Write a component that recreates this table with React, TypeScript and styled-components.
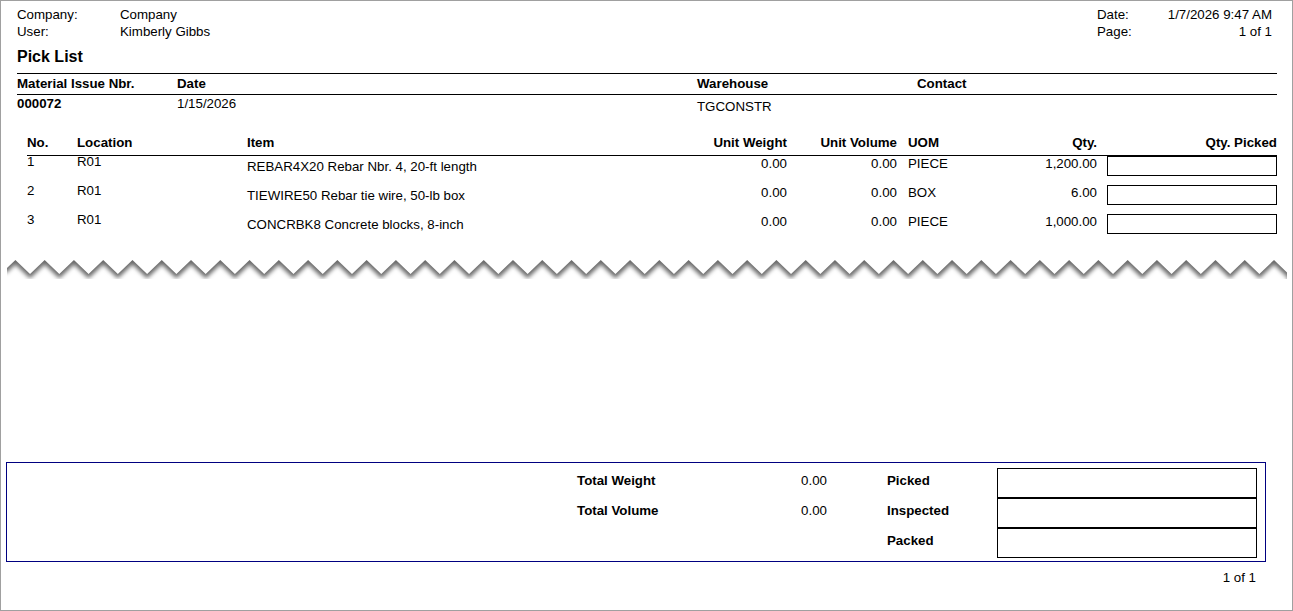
import React from "react";
import styled, { createGlobalStyle } from "styled-components";

const GlobalStyle = createGlobalStyle`
  html, body { margin: 0; padding: 0; background: #fff; }
  body { font-family: "Liberation Sans", Arial, sans-serif; color: #000; }
  * { box-sizing: border-box; }
`;

const Page = styled.div`
  width: 1293px;
  height: 611px;
  border: 1px solid #a0a0a0;
  background: #fff;
  display: flex;
  flex-direction: column;
  font-size: 13.3px;
  overflow: hidden;
`;

const Body = styled.div`
  padding: 5px 15px 0 16px;
`;

const MetaBar = styled.div`
  display: flex;
  justify-content: space-between;
`;

const MetaGrid = styled.div<{ $label: number; $width?: number; $right?: boolean }>`
  display: grid;
  grid-template-columns: ${(p) => p.$label}px 1fr;
  line-height: 17px;
  width: ${(p) => (p.$width ? `${p.$width}px` : "auto")};
  margin-right: ${(p) => (p.$right ? "5px" : "0")};
  & > span:nth-child(2n) {
    text-align: ${(p) => (p.$right ? "right" : "left")};
  }
`;

const Title = styled.h1`
  margin: 7px 0 0;
  font-size: 16px;
  line-height: 20px;
  font-weight: bold;
`;

const InfoHead = styled.div`
  margin-top: 6px;
  display: grid;
  grid-template-columns: 160px 520px 220px 360px;
  border-top: 1px solid #000;
  border-bottom: 1px solid #000;
  height: 22px;
  line-height: 20px;
  font-weight: bold;
`;

const InfoValues = styled.div`
  display: grid;
  grid-template-columns: 160px 520px 220px 360px;
  line-height: 17px;
`;

const InfoValue = styled.span<{ $bold?: boolean; $offset?: number }>`
  font-weight: ${(p) => (p.$bold ? "bold" : "normal")};
  padding-top: ${(p) => p.$offset ?? 0}px;
`;

const cols = "50px 170px 450px 90px 110px 100px 100px 180px";

const Table = styled.div`
  margin: 19px 0 0 10px;
`;

const HeadRow = styled.div`
  display: grid;
  grid-template-columns: ${cols};
  line-height: 18px;
  padding-bottom: 3px;
  border-bottom: 1px solid #000;
  font-weight: bold;
`;

const Row = styled.div`
  display: grid;
  grid-template-columns: ${cols};
  height: 29px;
  line-height: 12px;
`;

const Cell = styled.span<{ $align?: "left" | "right"; $pad?: number; $offset?: number }>`
  text-align: ${(p) => p.$align ?? "left"};
  padding-left: ${(p) => p.$pad ?? 0}px;
  padding-top: ${(p) => p.$offset ?? 0}px;
  white-space: nowrap;
`;

const PickBox = styled.div`
  margin-left: 10px;
  height: 20px;
  border: 1px solid #000;
`;

const Tear = styled.div`
  margin-top: 6px;
  height: 32px;
  line-height: 0;
`;

const FooterBox = styled.div`
  margin: auto 26px 8px 5px;
  height: 100px;
  border: 1px solid #000080;
  padding-top: 5px;
  display: grid;
  grid-template-columns: 570px 150px 100px 60px 110px 260px;
  grid-auto-rows: 30px;
`;

const FootLabel = styled.span<{ $col: number }>`
  grid-column: ${(p) => p.$col};
  font-weight: bold;
  line-height: 26px;
`;

const FootValue = styled.span`
  grid-column: 3;
  text-align: right;
  line-height: 26px;
`;

const SignBox = styled.div`
  grid-column: 6;
  border: 1px solid #000;
`;

const PageNum = styled.div`
  text-align: right;
  padding-right: 36px;
  line-height: 16px;
  margin-bottom: 24px;
`;

const rows = [
  { no: "1", loc: "R01", item: "REBAR4X20 Rebar Nbr. 4, 20-ft length", uom: "PIECE", qty: "1,200.00" },
  { no: "2", loc: "R01", item: "TIEWIRE50 Rebar tie wire, 50-lb box", uom: "BOX", qty: "6.00" },
  { no: "3", loc: "R01", item: "CONCRBK8 Concrete blocks, 8-inch", uom: "PIECE", qty: "1,000.00" },
];

function zigzag() {
  const P = 29.27;
  const px0 = 14.4;
  const top = 11;
  const amp = 14;
  const h = P / 2;
  const x0 = 6;
  const x1 = 1286;
  const yAt = (x: number) => {
    const t = (((x - px0) % P) + P) % P;
    const d = Math.min(t, P - t);
    return top + (amp * d) / h;
  };
  const pts: [number, number][] = [[x0, yAt(x0)]];
  for (let k = 0; k < 200; k++) {
    const pk = px0 + k * P;
    const vl = pk + h;
    if (pk > x0 && pk < x1) pts.push([pk, top]);
    if (vl > x0 && vl < x1) pts.push([vl, top + amp]);
  }
  pts.push([x1, yAt(x1)]);
  return pts;
}

const TearLine: React.FC = () => {
  const pts = zigzag();
  const line = pts.map(([x, y]) => `${x.toFixed(2)},${y.toFixed(2)}`).join(" ");
  const shifted = pts.map(([x, y]) => `${x.toFixed(2)},${(y + 4.5).toFixed(2)}`).join(" ");
  const gray = `${line} 1286,30 6,30`;
  const white = `${shifted} 1300,60 -10,60 -10,${(pts[0][1] + 4.5).toFixed(2)}`;
  return (
    <svg width="1291" height="32" viewBox="0 0 1291 32">
      <defs>
        <filter id="soft" x="-5%" y="-50%" width="110%" height="200%">
          <feGaussianBlur stdDeviation="2" />
        </filter>
        <clipPath id="clip">
          <rect x="0" y="0" width="1291" height="32" />
        </clipPath>
      </defs>
      <g clipPath="url(#clip)">
        <polygon points={gray} fill="#6a6a6a" />
        <polygon points={white} fill="#fff" filter="url(#soft)" />
      </g>
    </svg>
  );
};

export default function App() {
  return (
    <>
      <GlobalStyle />
      <Page>
        <Body>
          <MetaBar>
            <MetaGrid $label={103}>
              <span>Company:</span>
              <span>Company</span>
              <span>User:</span>
              <span>Kimberly Gibbs</span>
            </MetaGrid>
            <MetaGrid $label={70} $width={175} $right>
              <span>Date:</span>
              <span>1/7/2026 9:47 AM</span>
              <span>Page:</span>
              <span>1 of 1</span>
            </MetaGrid>
          </MetaBar>
          <Title>Pick List</Title>
          <InfoHead>
            <span>Material Issue Nbr.</span>
            <span>Date</span>
            <span>Warehouse</span>
            <span>Contact</span>
          </InfoHead>
          <InfoValues>
            <InfoValue $bold>000072</InfoValue>
            <InfoValue>1/15/2026</InfoValue>
            <InfoValue $offset={3}>TGCONSTR</InfoValue>
            <InfoValue></InfoValue>
          </InfoValues>
          <Table>
            <HeadRow>
              <Cell>No.</Cell>
              <Cell>Location</Cell>
              <Cell>Item</Cell>
              <Cell $align="right">Unit Weight</Cell>
              <Cell $align="right">Unit Volume</Cell>
              <Cell $pad={11}>UOM</Cell>
              <Cell $align="right">Qty.</Cell>
              <Cell $align="right">Qty. Picked</Cell>
            </HeadRow>
            {rows.map((r) => (
              <Row key={r.no}>
                <Cell $offset={0}>{r.no}</Cell>
                <Cell $offset={0}>{r.loc}</Cell>
                <Cell $offset={5}>{r.item}</Cell>
                <Cell $align="right" $offset={2}>0.00</Cell>
                <Cell $align="right" $offset={2}>0.00</Cell>
                <Cell $pad={11} $offset={2}>{r.uom}</Cell>
                <Cell $align="right" $offset={2}>{r.qty}</Cell>
                <PickBox />
              </Row>
            ))}
          </Table>
        </Body>
        <Tear>
          <TearLine />
        </Tear>
        <FooterBox>
          <FootLabel $col={2}>Total Weight</FootLabel>
          <FootValue>0.00</FootValue>
          <FootLabel $col={5}>Picked</FootLabel>
          <SignBox />
          <FootLabel $col={2}>Total Volume</FootLabel>
          <FootValue>0.00</FootValue>
          <FootLabel $col={5}>Inspected</FootLabel>
          <SignBox />
          <FootLabel $col={5}>Packed</FootLabel>
          <SignBox />
        </FooterBox>
        <PageNum>1 of 1</PageNum>
      </Page>
    </>
  );
}
